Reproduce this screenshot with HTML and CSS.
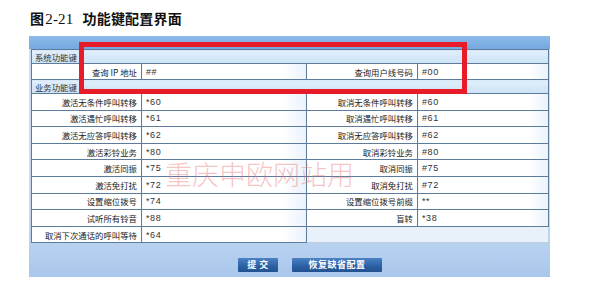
FILE: index.html
```html
<!DOCTYPE html>
<html lang="zh-CN">
<head>
  <meta charset="UTF-8" />
  <meta name="viewport" content="width=device-width, initial-scale=1.0"/>
  <title>功能键配置界面</title>
  <link rel="stylesheet" href="styles.css">
</head>
<body>

  <div class="page">
    <h1 class="fig-title">图<span class="fig-num">2-21</span>功能键配置界面</h1>

    <div class="panel">
      <div class="panel-band"></div>
      <table class="keys">
        <colgroup>
          <col class="c-label"><col class="c-value"><col class="c-label2"><col class="c-value2">
        </colgroup>
        <tr class="sec"><td colspan="4">系统功能键</td></tr>
        <tr class="row first">
          <td class="lbl">查询 IP 地址</td><td class="val">##</td>
          <td class="lbl">查询用户线号码</td><td class="val">#00</td>
        </tr>
        <tr class="sec"><td colspan="4">业务功能键</td></tr>
        <tr class="row">
          <td class="lbl">激活无条件呼叫转移</td><td class="val">*60</td>
          <td class="lbl">取消无条件呼叫转移</td><td class="val">#60</td>
        </tr>
        <tr class="row">
          <td class="lbl">激活遇忙呼叫转移</td><td class="val">*61</td>
          <td class="lbl">取消遇忙呼叫转移</td><td class="val">#61</td>
        </tr>
        <tr class="row">
          <td class="lbl">激活无应答呼叫转移</td><td class="val">*62</td>
          <td class="lbl">取消无应答呼叫转移</td><td class="val">#62</td>
        </tr>
        <tr class="row">
          <td class="lbl">激活彩铃业务</td><td class="val">*80</td>
          <td class="lbl">取消彩铃业务</td><td class="val">#80</td>
        </tr>
        <tr class="row">
          <td class="lbl">激活同振</td><td class="val">*75</td>
          <td class="lbl">取消同振</td><td class="val">#75</td>
        </tr>
        <tr class="row">
          <td class="lbl">激活免打扰</td><td class="val">*72</td>
          <td class="lbl">取消免打扰</td><td class="val">#72</td>
        </tr>
        <tr class="row">
          <td class="lbl">设置缩位拨号</td><td class="val">*74</td>
          <td class="lbl">设置缩位拨号前缀</td><td class="val">**</td>
        </tr>
        <tr class="row">
          <td class="lbl">试听所有铃音</td><td class="val">*88</td>
          <td class="lbl">盲转</td><td class="val">*38</td>
        </tr>
        <tr class="row last">
          <td class="lbl">取消下次通话的呼叫等待</td><td class="val">*64</td>
          <td class="empty" colspan="2"></td>
        </tr>
      </table>

      <div class="actions">
        <button class="btn btn-submit">提 交</button>
        <button class="btn btn-reset">恢复缺省配置</button>
      </div>
    </div>

    <!-- overlays from the original figure -->
    <div class="mark-box"></div>
    <div class="watermark">重庆申欧网站用</div>
  </div>

</body>
</html>
```

FILE: styles.css
```css
body{margin:0;background:#fff;font-family:"Noto Sans CJK SC","Liberation Sans",sans-serif;color:#222}
.page{position:relative;width:607px;height:297px;overflow:hidden}
.fig-title{margin:0;padding:10px 0 0 30px;height:16px;font-size:14px;line-height:16px;font-weight:600;color:#111;letter-spacing:0.2px}
.fig-num{font-family:"Liberation Serif",serif;font-weight:normal;font-size:15px;margin:0 9px 0 1px}
.panel{margin:10px 0 0 29px;width:521px;height:241px;background:linear-gradient(to bottom,#cfe0f4 0%,#c4d9f1 75%,#a9c7ec 100%)}
.panel-band{height:13px;background:linear-gradient(to bottom,#8dbbe9,#74a8e0)}
.keys{margin-left:2px;width:517px;border-collapse:collapse;table-layout:fixed;font-size:8.4px;line-height:10px}
.c-label{width:110px}
.c-value{width:165px}
.c-label2{width:111px}
.c-value2{width:131px}
.keys td{border:1px solid #5d7c9c;padding:0 4px;white-space:nowrap;overflow:hidden}
.sec{height:14px}
.sec td{background:linear-gradient(to bottom,#e0eefa,#cde3f5);color:#333;padding-left:3px}
.row{height:16.6px}
.row.first{height:16px}
.lbl{background:#fff;text-align:right;padding-right:3px}
.val{background:linear-gradient(to right,#fff 85%,#e9f2fb);font-family:"Liberation Sans",sans-serif;font-size:9px;letter-spacing:0.6px;color:#333}
.keys td.empty{background:#e8f1fa;border-right-color:transparent;border-bottom-color:#b9cce0}
.actions{display:flex;gap:14px;padding:15px 0 0 209px}
.btn{height:14px;padding:0;border:none;border-radius:1px;background:linear-gradient(to bottom,#4a82c4,#2b5fa3 60%,#22518f);color:#fff;font-family:"Noto Sans CJK SC",sans-serif;font-size:9px;font-weight:bold;line-height:14px;letter-spacing:0.5px;cursor:pointer}
.btn-submit{width:40px}
.btn-reset{width:90px}
.mark-box{position:absolute;left:79px;top:42px;width:388px;height:52px;box-sizing:border-box;border:5px solid #e81c28}
.watermark{position:absolute;left:165px;top:159px;font-size:27px;line-height:30px;font-weight:300;color:rgba(236,110,110,0.42);letter-spacing:0}
```
